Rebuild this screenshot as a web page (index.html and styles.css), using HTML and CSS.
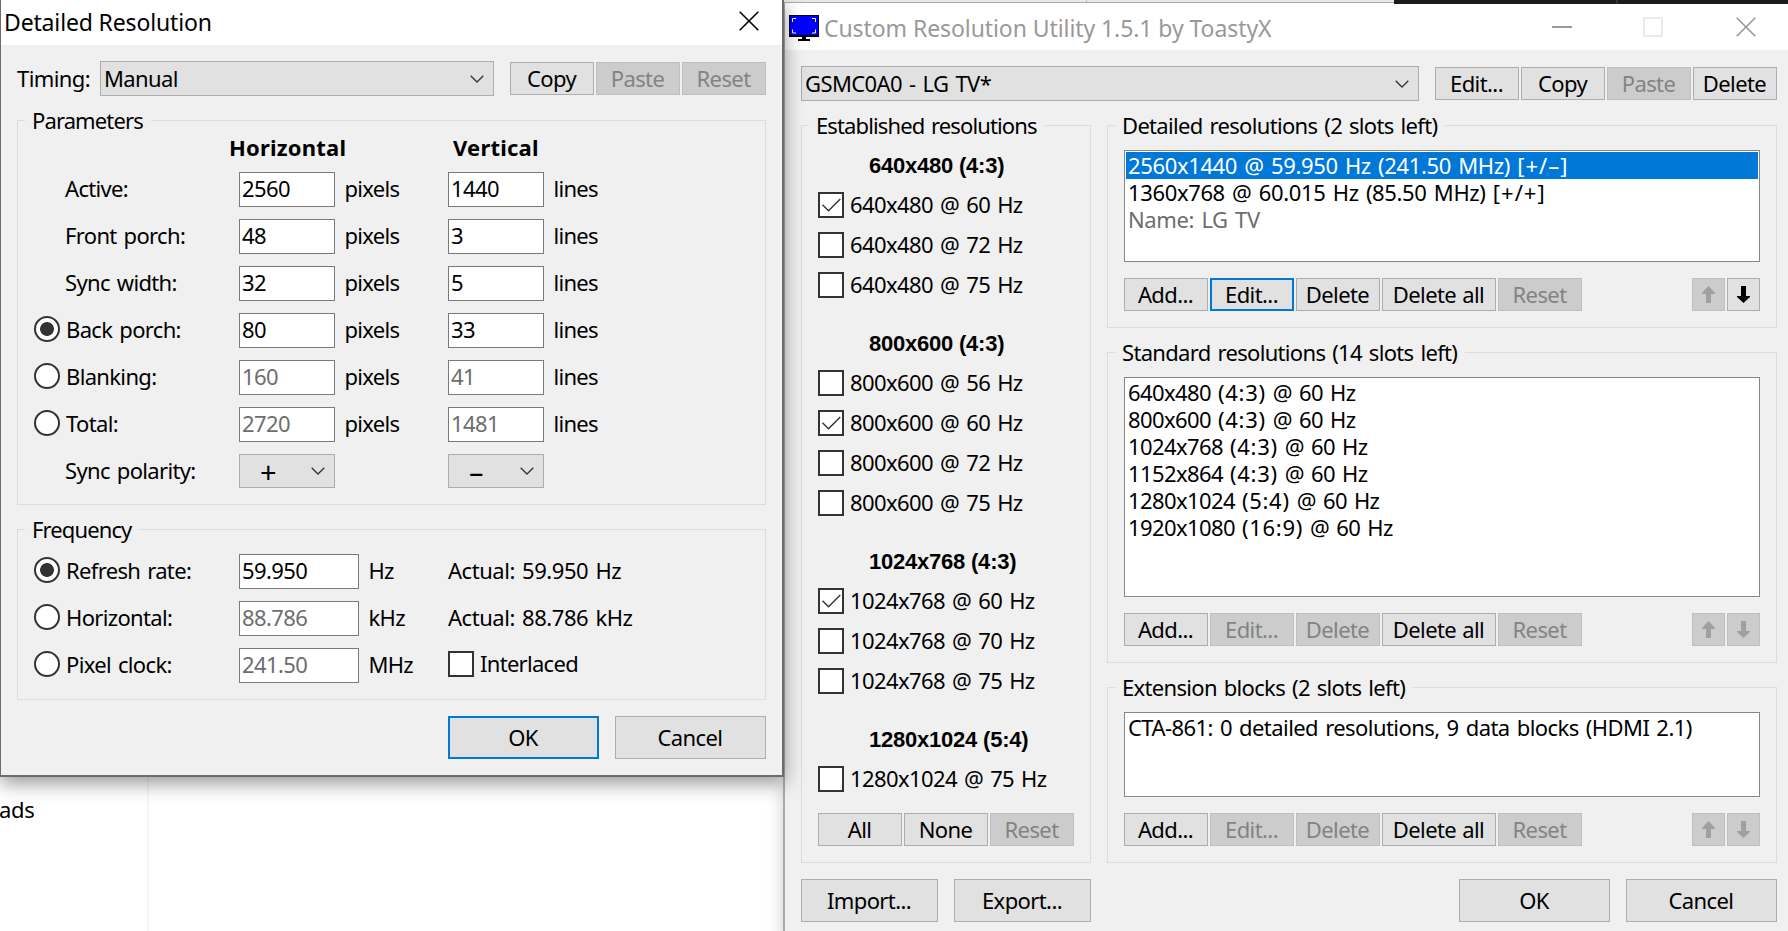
FILE: index.html
```html
<!DOCTYPE html>
<html lang="en">
<head>
    <meta charset="UTF-8">
    <meta name="viewport" content="width=device-width, initial-scale=1.0">
    <title>Custom Resolution Utility</title>
    <link rel="stylesheet" href="styles.css">
</head>
<body>

    <!-- Shared symbols -->
    <svg class="symbols">
        <symbol id="chevron" viewBox="0 0 14 8"><path d="M.7 .7 7 7 13.3 .7" fill="none" stroke="#333" stroke-width="1.3"/></symbol>
        <symbol id="check" viewBox="0 0 22 22"><path d="M2.5 10.8 8.5 16.8 20.3 5" fill="none" stroke="#333" stroke-width="1.4"/></symbol>
        <symbol id="close" viewBox="0 0 20 20"><path d="M.7 .7 19.3 19.3M19.3 .7 .7 19.3" fill="none" stroke="currentColor" stroke-width="1.6"/></symbol>
        <symbol id="up" viewBox="0 0 13 17"><path d="M6.5 0 13 7V8H9V17H4V8H0V7Z" fill="currentColor"/></symbol>
        <symbol id="down" viewBox="0 0 13 17"><path d="M6.5 17 13 11V10H9V0H4V10H0V11Z" fill="currentColor"/></symbol>
    </svg>

    <div class="desktop">
        <div class="sidebar"><span>ads</span></div>

        <!-- Main window -->
        <div class="window main">
            <div class="titlebar">
                <svg class="monitor" viewBox="0 0 30 26">
                    <path d="M0 0H30V22H17V24H21V26H9V24H13V22H0Z" fill="#000"/>
                    <path d="M1 1H29V20H1Z" fill="#00f"/>
                    <path d="M3.5 7V3.5H7M23 3.5H26.500V7M26.500 14.500V18H23M7 18H3.500V14.500" fill="none" stroke="#fff"/>
                </svg>
                <span class="title">Custom Resolution Utility 1.5.1 by ToastyX</span>
                <i class="min"></i>
                <i class="max"></i>
                <svg class="x"><use href="#close"/></svg>
            </div>
            <div class="content">
                <div class="row monitor-row">
                    <div class="combo"><span>GSMC0A0 - LG TV*</span><svg><use href="#chevron"/></svg></div>
                    <div class="buttons">
                        <button>Edit...</button>
                        <button>Copy</button>
                        <button disabled>Paste</button>
                        <button>Delete</button>
                    </div>
                </div>

                <div class="columns">
                    <div class="group established">
                        <div class="legend">Established resolutions</div>
                        <h4>640x480 (4:3)</h4>
                        <label><i class="box"><svg><use href="#check"/></svg></i>640x480 @ 60 Hz</label>
                        <label><i class="box"></i>640x480 @ 72 Hz</label>
                        <label><i class="box"></i>640x480 @ 75 Hz</label>
                        <h4>800x600 (4:3)</h4>
                        <label><i class="box"></i>800x600 @ 56 Hz</label>
                        <label><i class="box"><svg><use href="#check"/></svg></i>800x600 @ 60 Hz</label>
                        <label><i class="box"></i>800x600 @ 72 Hz</label>
                        <label><i class="box"></i>800x600 @ 75 Hz</label>
                        <h4>1024x768 (4:3)</h4>
                        <label><i class="box"><svg><use href="#check"/></svg></i>1024x768 @ 60 Hz</label>
                        <label><i class="box"></i>1024x768 @ 70 Hz</label>
                        <label><i class="box"></i>1024x768 @ 75 Hz</label>
                        <h4>1280x1024 (5:4)</h4>
                        <label><i class="box"></i>1280x1024 @ 75 Hz</label>
                        <div class="buttons">
                            <button>All</button>
                            <button>None</button>
                            <button disabled>Reset</button>
                        </div>
                    </div>

                    <div class="lists">
                        <div class="group detailed">
                            <div class="legend">Detailed resolutions (2 slots left)</div>
                            <ul>
                                <li class="selected">2560x1440 @ 59.950 Hz (241.50 MHz) <span class="sync">[+/–]</span></li>
                                <li>1360x768 @ 60.015 Hz (85.50 MHz) <span class="sync">[+/+]</span></li>
                                <li class="info">Name: LG TV</li>
                            </ul>
                            <div class="buttons">
                                <button>Add...</button>
                                <button class="default">Edit...</button>
                                <button>Delete</button>
                                <button class="wide">Delete all</button>
                                <button disabled>Reset</button>
                                <button class="arrow first" disabled><svg><use href="#up"/></svg></button>
                                <button class="arrow"><svg><use href="#down"/></svg></button>
                            </div>
                        </div>
                        <div class="group standard">
                            <div class="legend">Standard resolutions (14 slots left)</div>
                            <ul>
                                <li>640x480 <span class="ratio">(4:3)</span> @ 60 Hz</li>
                                <li>800x600 <span class="ratio">(4:3)</span> @ 60 Hz</li>
                                <li>1024x768 <span class="ratio">(4:3)</span> @ 60 Hz</li>
                                <li>1152x864 <span class="ratio">(4:3)</span> @ 60 Hz</li>
                                <li>1280x1024 <span class="ratio">(5:4)</span> @ 60 Hz</li>
                                <li>1920x1080 <span class="ratio">(16:9)</span> @ 60 Hz</li>
                            </ul>
                            <div class="buttons">
                                <button>Add...</button>
                                <button disabled>Edit...</button>
                                <button disabled>Delete</button>
                                <button class="wide">Delete all</button>
                                <button disabled>Reset</button>
                                <button class="arrow first" disabled><svg><use href="#up"/></svg></button>
                                <button class="arrow" disabled><svg><use href="#down"/></svg></button>
                            </div>
                        </div>
                        <div class="group extension">
                            <div class="legend">Extension blocks (2 slots left)</div>
                            <ul>
                                <li>CTA-861: 0 detailed resolutions, 9 data blocks (HDMI 2.1)</li>
                            </ul>
                            <div class="buttons">
                                <button>Add...</button>
                                <button disabled>Edit...</button>
                                <button disabled>Delete</button>
                                <button class="wide">Delete all</button>
                                <button disabled>Reset</button>
                                <button class="arrow first" disabled><svg><use href="#up"/></svg></button>
                                <button class="arrow" disabled><svg><use href="#down"/></svg></button>
                            </div>
                        </div>
                    </div>
                </div>

                <div class="row footer">
                    <button class="big file">Import...</button>
                    <button class="big file">Export...</button>
                    <button class="big ok">OK</button>
                    <button class="big">Cancel</button>
                </div>
            </div>
        </div>

        <div class="strip"><i class="light"></i><i class="light"></i><i class="dark"></i><i class="dark"></i></div>

        <!-- Detailed resolution dialog -->
        <div class="window dialog">
            <div class="titlebar">
                <span class="title">Detailed Resolution</span>
                <svg class="x"><use href="#close"/></svg>
            </div>
            <div class="content">
                <div class="row timing">
                    <span class="caption">Timing:</span>
                    <div class="combo"><span>Manual</span><svg><use href="#chevron"/></svg></div>
                    <div class="buttons">
                        <button>Copy</button>
                        <button disabled>Paste</button>
                        <button disabled>Reset</button>
                    </div>
                </div>

                <div class="group parameters">
                    <div class="legend">Parameters</div>
                    <div class="params">
                        <b class="h">Horizontal</b><b class="v">Vertical</b>
                        <span class="name">Active:</span><div class="field">2560</div><span class="unit">pixels</span><div class="field">1440</div><span class="unit">lines</span>
                        <span class="name">Front porch:</span><div class="field">48</div><span class="unit">pixels</span><div class="field">3</div><span class="unit">lines</span>
                        <span class="name">Sync width:</span><div class="field">32</div><span class="unit">pixels</span><div class="field">5</div><span class="unit">lines</span>
                        <span class="name"><i class="radio on"></i>Back porch:</span><div class="field">80</div><span class="unit">pixels</span><div class="field">33</div><span class="unit">lines</span>
                        <span class="name"><i class="radio"></i>Blanking:</span><div class="field off">160</div><span class="unit">pixels</span><div class="field off">41</div><span class="unit">lines</span>
                        <span class="name"><i class="radio"></i>Total:</span><div class="field off">2720</div><span class="unit">pixels</span><div class="field off">1481</div><span class="unit">lines</span>
                        <span class="name">Sync polarity:</span>
                        <div class="combo sign"><span>+</span><svg><use href="#chevron"/></svg></div><span></span>
                        <div class="combo sign"><span>–</span><svg><use href="#chevron"/></svg></div><span></span>
                    </div>
                </div>

                <div class="group frequency">
                    <div class="legend">Frequency</div>
                    <div class="freqs">
                        <span class="name"><i class="radio on"></i>Refresh rate:</span><div class="field">59.950</div><span class="unit">Hz</span><span class="actual">Actual: 59.950 Hz</span>
                        <span class="name"><i class="radio"></i>Horizontal:</span><div class="field off">88.786</div><span class="unit">kHz</span><span class="actual">Actual: 88.786 kHz</span>
                        <span class="name"><i class="radio"></i>Pixel clock:</span><div class="field off">241.50</div><span class="unit">MHz</span><label><i class="box"></i>Interlaced</label>
                    </div>
                </div>

                <div class="row footer">
                    <button class="big default ok">OK</button>
                    <button class="big">Cancel</button>
                </div>
            </div>
        </div>
    </div>

</body>
</html>
```

FILE: styles.css
```css
* {
    box-sizing: border-box;
}

body {
    margin: 0;
    font-family: "Noto Sans", sans-serif;
    font-size: 22px;
    line-height: 30px;
    letter-spacing: -0.6px;
    word-spacing: 1.9px;
    color: #000;
    white-space: nowrap;
}

.symbols {
    display: none;
}

.desktop {
    position: relative;
    width: 1788px;
    height: 931px;
    overflow: hidden;
    background-color: #fff;
}

/* Things behind the windows */
.sidebar {
    width: 149px;
    height: 931px;
    padding-top: 794px;
    border-right: 2px solid #f5f5f5;
    letter-spacing: -0.3px;
}

.sidebar span {
    margin-left: -1px;
}

.strip {
    position: absolute;
    top: 0;
    left: 784px;
    width: 1004px;
    display: flex;
}

.strip i {
    flex-shrink: 0;
}

.strip .light {
    width: 303px;
    height: 2px;
    border-right: 1px solid #bbb;
    background-color: #e9e9e9;
}

.strip .light + .light {
    width: 307px;
    border: 0;
}

.strip .dark {
    width: 224px;
    height: 4px;
    background-color: #1b1b1b;
    border-right: 2px solid #333;
}

.strip .dark:last-child {
    border: 0;
}

/* Windows */
.window {
    position: absolute;
    background-color: #f0f0f0;
}

.main {
    left: 783px;
    top: 2px;
    width: 1012px;
    height: 940px;
    border: solid #aaa;
    border-width: 1px 0 0 2px;
    box-shadow: 0 4px 16px rgba(0, 0, 0, 0.2);
}

.dialog {
    left: 0;
    top: 0;
    width: 784px;
    height: 777px;
    border: solid #6c6c6e;
    border-width: 0 2px 2px 1px;
    box-shadow: 0 6px 18px rgba(0, 0, 0, 0.42);
}

.titlebar {
    display: flex;
    align-items: center;
    background-color: #fff;
}

.title {
    font-size: 23px;
    letter-spacing: -0.08px;
    word-spacing: 0;
}

.dialog .titlebar {
    height: 45px;
    padding: 0 23px 3px 3px;
}

.dialog .title {
    padding-top: 2px;
    letter-spacing: -0.15px;
}

.main .titlebar {
    height: 47px;
    padding-left: 4px;
    color: #999;
}

.monitor {
    width: 30px;
    height: 26px;
    margin: 3px 5px 0 0;
}

.main .title {
    width: 728px;
    padding-top: 2px;
}

.x {
    width: 20px;
    height: 20px;
    margin-left: auto;
}

.min {
    width: 20px;
    height: 2px;
    margin-right: 71px;
    background-color: #999;
}

.max {
    width: 20px;
    height: 20px;
    border: 2px solid #ebebeb;
}

.main .x {
    margin-left: 73px;
}

.dialog .content {
    padding: 16px 16px 0;
}

.main .content {
    width: 992px;
    padding: 16px 0 0 16px;
}

.row {
    display: flex;
    align-items: center;
}

/* Buttons */
.buttons {
    display: flex;
    gap: 2px;
}

button {
    display: flex;
    align-items: center;
    justify-content: center;
    width: 84px;
    height: 33px;
    padding: 0 1px 1px 0;
    border: 1px solid #adadad;
    background-color: #e1e1e1;
    font: inherit;
    letter-spacing: inherit;
    word-spacing: 1px;
    color: #000;
}

button:disabled {
    border-color: #bfbfbf;
    background-color: #ccc;
    color: #838383;
}

.wide {
    width: 114px;
}

.big {
    width: 151px;
    height: 43px;
}

.default {
    border: 2px solid #0078d7;
}

.arrow {
    width: 33px;
    padding: 0;
}

.arrow.first {
    margin-left: auto;
}

.arrow svg {
    width: 13px;
    height: 17px;
}

.arrow:disabled {
    color: #a0a0a0;
}

/* Combo boxes and fields */
.combo {
    display: flex;
    align-items: center;
    justify-content: space-between;
    height: 35px;
    padding: 0 9px 0 3px;
    border: 1px solid #adadad;
    background-color: #e1e1e1;
}

.combo span {
    padding-bottom: 2px;
}

.combo svg {
    width: 14px;
    height: 8px;
}

.sign {
    align-self: start;
    height: 34px;
    padding-left: 20px;
}

.sign span {
    padding: 2px 0 0;
    font-size: 29px;
}

.field {
    height: 35px;
    padding: 0 2px;
    border: 1px solid #7a7a7a;
    background-color: #fff;
}

.off {
    color: #6d6d6d;
}

.caption {
    padding-bottom: 2px;
}

.name,
.unit,
.actual {
    padding-bottom: 4px;
}

/* Radio buttons and checkboxes */
.radio {
    width: 26px;
    height: 26px;
    margin: 1px 6px 0 -31px;
    border: 2px solid #333;
    border-radius: 50%;
    background-color: #fff;
}

.radio.on {
    background: radial-gradient(circle, #333 6.5px, #fff 7.3px);
}

label {
    display: flex;
    align-items: center;
    height: 26px;
    padding-bottom: 2px;
}

.box {
    display: flex;
    width: 26px;
    height: 26px;
    margin: 2px 6px 0 0;
    border: 2px solid #333;
    background-color: #fff;
}

.box svg {
    width: 22px;
    height: 22px;
}

/* Groups */
.group {
    border: 1px solid #dcdcdc;
}

.legend {
    width: fit-content;
    height: 30px;
    margin: -15px 0 0 7px;
    padding: 0 8px 0 7px;
    background-color: #f0f0f0;
    line-height: 28px;
}

.lists .legend {
    letter-spacing: -0.68px;
}

/* Dialog content */
.dialog .legend,
.established .legend {
    letter-spacing: -0.88px;
}

.timing .combo {
    width: 394px;
    margin: 0 16px 0 auto;
}

.parameters {
    height: 385px;
    margin-top: 24px;
}

.params {
    display: grid;
    grid-template-columns: 172px 96px 113px 96px auto;
    grid-template-rows: 24px repeat(7, 35px);
    row-gap: 12px;
    align-items: center;
    padding-left: 49px;
}

.params b {
    padding-bottom: 2px;
    letter-spacing: 0.2px;
}

.params .h {
    grid-column: 2 / 4;
    margin-left: -10px;
}

.params .v {
    grid-column: 4 / 6;
    margin-left: 5px;
}

.unit {
    padding-left: 9.5px;
    letter-spacing: -0.7px;
}

.name {
    display: flex;
    align-items: center;
    margin-left: -2px;
    letter-spacing: -0.66px;
}

.actual {
    letter-spacing: -0.45px;
}

.frequency {
    height: 171px;
    margin-top: 24px;
}

.freqs {
    display: grid;
    grid-template-columns: 172px 120px 89px auto;
    grid-auto-rows: 35px;
    row-gap: 12px;
    align-items: center;
    padding: 9px 0 0 49px;
}

.freqs label {
    margin-top: -3px;
    letter-spacing: -0.7px;
}

.footer {
    margin-top: 16px;
}

.footer .ok {
    margin: 0 16px 0 auto;
}

/* Main window content */
.monitor-row .combo {
    width: 618px;
    margin-right: 16px;
}

.columns {
    display: flex;
    gap: 16px;
    margin-top: 24px;
}

.established {
    width: 290px;
    height: 738px;
}

.established h4 {
    height: 30px;
    margin: 31px 0 11px 67px;
    font-family: "Liberation Sans", sans-serif;
    font-size: 22px;
    letter-spacing: -0.22px;
    word-spacing: 0;
}

.established .legend + h4 {
    margin-top: 10px;
}

.established label {
    margin: 0 0 14px 16px;
}

.established .buttons {
    margin: 21px 0 0 16px;
}

.lists {
    width: 670px;
}

.lists .group {
    margin-bottom: 24px;
}

.detailed {
    height: 203px;
}

.standard {
    height: 311px;
}

.lists .extension {
    height: 176px;
    margin-bottom: 0;
}

.lists ul {
    height: 112px;
    margin: 9px 16px 16px;
    padding: 1px;
    border: 1px solid #828790;
    background-color: #fff;
    list-style: none;
}

.standard ul {
    height: 220px;
}

.extension ul {
    height: 85px;
}

.lists li {
    height: 27px;
    padding-left: 2px;
    line-height: 26px;
}

.detailed li {
    letter-spacing: -0.36px;
}

.extension li {
    letter-spacing: -0.56px;
}

.ratio {
    letter-spacing: 0.7px;
}

.sync {
    letter-spacing: 1px;
}

.lists .buttons {
    margin: 0 16px;
}

.selected {
    background-color: #0078d7;
    color: #fff;
}

.info {
    color: #6d6d6d;
}

.file {
    width: 137px;
    margin-right: 16px;
}
```
